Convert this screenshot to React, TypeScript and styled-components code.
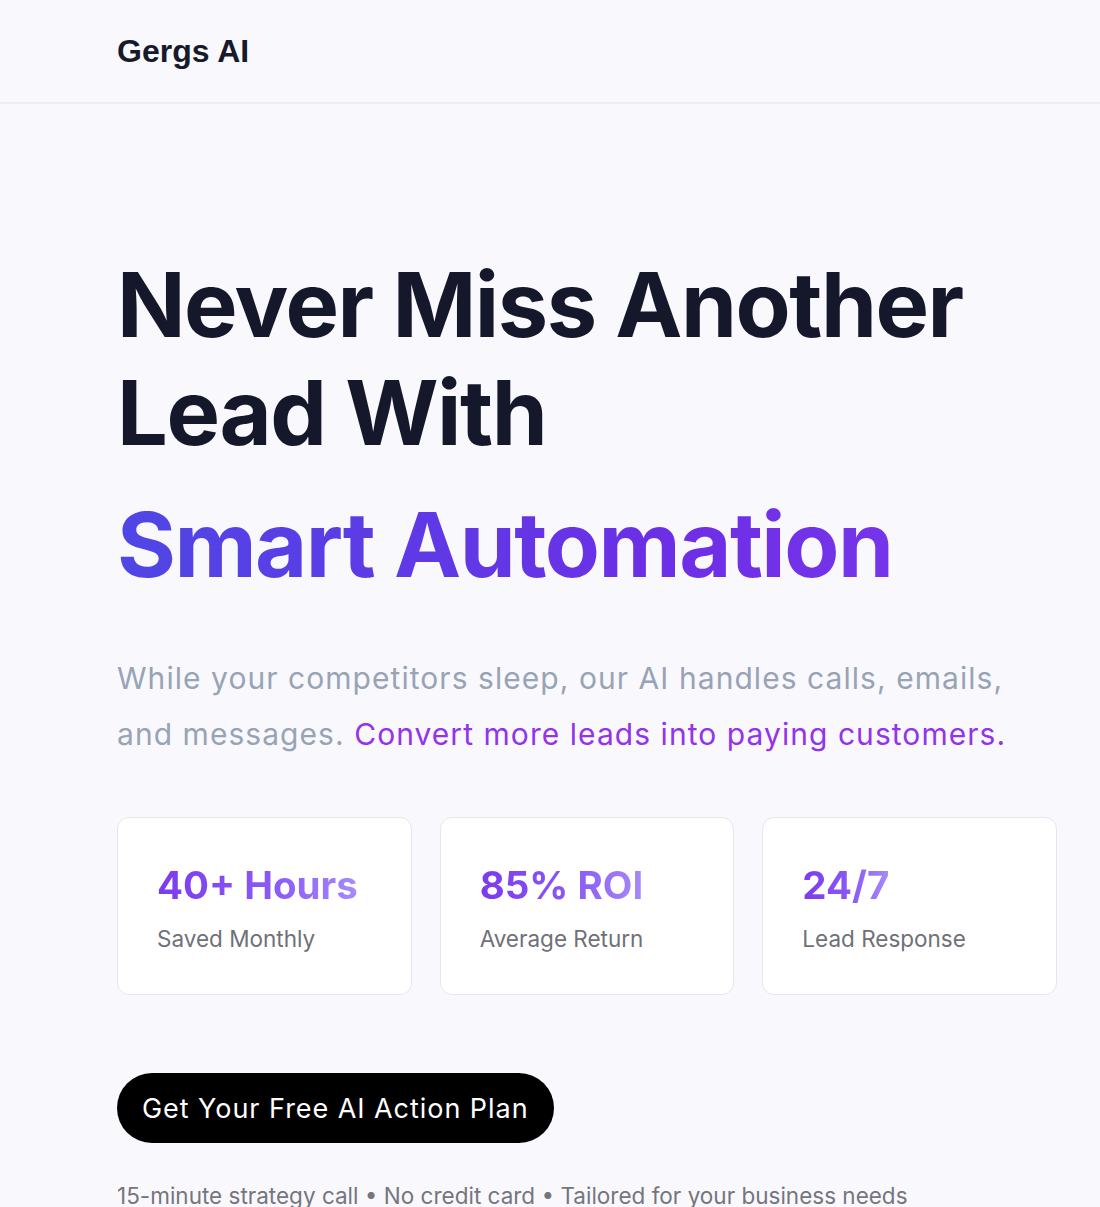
import styled, { createGlobalStyle } from "styled-components";

const GlobalStyle = createGlobalStyle`
  * {
    box-sizing: border-box;
  }

  body {
    margin: 0;
    background: #f9f9fd;
    font-family: "Inter", "Noto Sans", sans-serif;
    color: #151525;
  }
`;

const Page = styled.div`
  min-height: 1207px;
  overflow: hidden;
`;

const Header = styled.header`
  height: 104px;
  display: flex;
  align-items: center;
  padding-left: 117px;
  border-bottom: 2px solid #ececf2;
`;

const Logo = styled.div`
  font-family: "Liberation Sans", Arial, sans-serif;
  font-weight: 700;
  font-size: 32px;
  color: #161a2b;
`;

const Hero = styled.main`
  width: 940px;
  margin-left: 117px;
  padding-top: 147px;
`;

const Headline = styled.h1`
  margin: 0;
  font-size: 90px;
  font-weight: 700;
  line-height: 108px;
  letter-spacing: -1.5px;
  color: #15172a;
`;

const Accent = styled.span`
  display: block;
  margin-top: 24px;
  background: linear-gradient(90deg, #4f46e5 0%, #6d2ee6 60%, #7c3aed 100%);
  -webkit-background-clip: text;
  background-clip: text;
  color: transparent;
`;

const Lead = styled.p`
  margin: 51px 0 0;
  font-size: 30px;
  line-height: 56px;
  letter-spacing: 1.05px;
  color: #98a3b6;
`;

const Highlight = styled.span`
  color: #9333ea;
`;

const Stats = styled.div`
  margin-top: 55px;
  display: grid;
  grid-template-columns: repeat(3, 1fr);
  gap: 28px;
`;

const StatCard = styled.div`
  height: 178px;
  padding: 43px 39px 0;
  background: #ffffff;
  border: 1.5px solid #e6e6ec;
  border-radius: 12px;
`;

const StatValue = styled.div`
  font-size: 38.5px;
  font-weight: 700;
  line-height: 48px;
  background: linear-gradient(90deg, #7c3aed 0%, #8b5cf6 60%, #a78bfa 100%);
  -webkit-background-clip: text;
  background-clip: text;
  color: transparent;
  width: fit-content;
`;

const StatLabel = styled.div`
  margin-top: 14px;
  font-size: 22.5px;
  line-height: 32px;
  color: #707078;
`;

const CtaButton = styled.button`
  margin-top: 78px;
  height: 70px;
  padding: 0 25px;
  border: none;
  border-radius: 35px;
  background: #000000;
  color: #ffffff;
  font-family: "Inter", "Noto Sans", sans-serif;
  font-size: 27px;
  letter-spacing: 0.95px;
  cursor: pointer;
`;

const Fineprint = styled.p`
  margin: 37px 0 0;
  font-size: 22.5px;
  line-height: 32px;
  color: #75757d;
`;

const stats = [
  { value: "40+ Hours", label: "Saved Monthly" },
  { value: "85% ROI", label: "Average Return" },
  { value: "24/7", label: "Lead Response" },
];

export default function App() {
  return (
    <Page>
      <GlobalStyle />
      <Header>
        <Logo>Gergs AI</Logo>
      </Header>
      <Hero>
        <Headline>
          Never Miss Another Lead With
          <Accent>Smart Automation</Accent>
        </Headline>
        <Lead>
          While your competitors sleep, our AI handles calls, emails, and
          messages. <Highlight>Convert more leads into paying customers.</Highlight>
        </Lead>
        <Stats>
          {stats.map((s) => (
            <StatCard key={s.value}>
              <StatValue>{s.value}</StatValue>
              <StatLabel>{s.label}</StatLabel>
            </StatCard>
          ))}
        </Stats>
        <CtaButton>Get Your Free AI Action Plan</CtaButton>
        <Fineprint>
          15-minute strategy call • No credit card • Tailored for your business
          needs
        </Fineprint>
      </Hero>
    </Page>
  );
}
